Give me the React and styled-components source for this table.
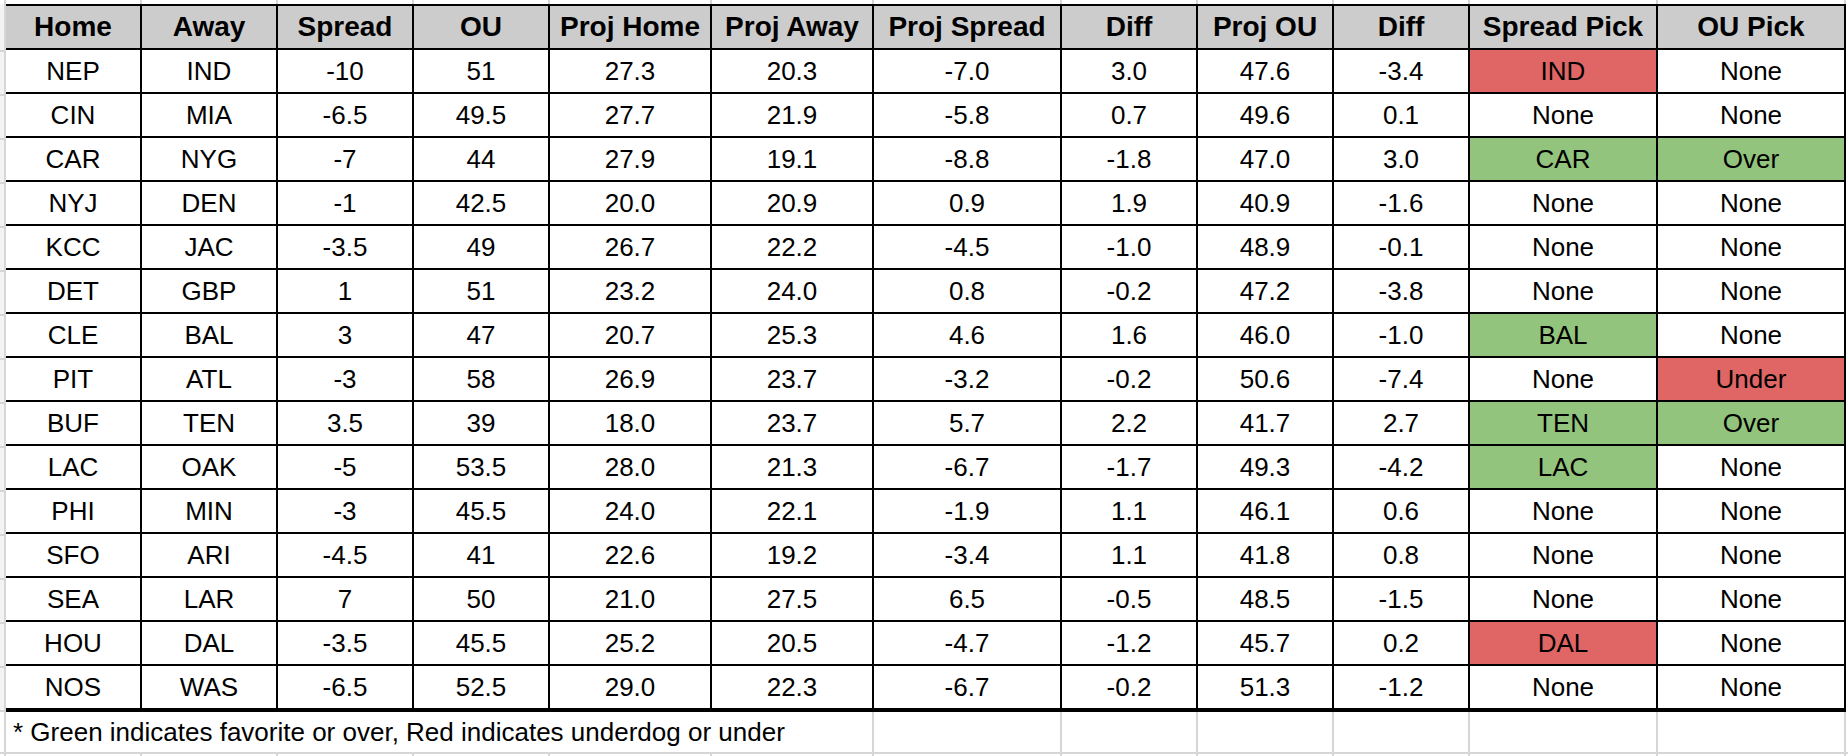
import React from "react";
import styled, { createGlobalStyle } from "styled-components";

const Global = createGlobalStyle`
  html, body { margin: 0; padding: 0; background: #ffffff; }
  body { font-family: "Liberation Sans", Arial, sans-serif; color: #000; overflow: hidden; }
`;

const GRID = "#d6d6d6";
const COLS = [134, 134, 134, 134, 160, 160, 186, 134, 134, 134, 186, 186];
const tableTemplate = COLS.map((w) => `${w}px`).join(" ");
const sheetTemplate = `4px ${tableTemplate} 1fr`;

const Page = styled.div`
  width: 1848px;
  height: 756px;
  display: flex;
  flex-direction: column;
  overflow: hidden;
`;

const GridStrip = styled.div`
  display: grid;
  grid-template-columns: ${sheetTemplate};
  column-gap: 2px;
  background: ${GRID};
  height: ${(p) => (p.$h ? `${p.$h}px` : "auto")};
  flex: ${(p) => (p.$grow ? "1 1 auto" : "0 0 auto")};
`;

const BlankCell = styled.div`
  background: #ffffff;
`;

const Middle = styled.div`
  display: flex;
  flex: 0 0 auto;
`;

const Gutter = styled.div`
  width: 4px;
  border-right: 2px solid ${GRID};
  display: flex;
  flex-direction: column;
  padding-top: 4px;
  background: #f3f3f3;
`;

const GutterRow = styled.div`
  height: 42px;
  border-bottom: 2px solid ${GRID};
`;

const Table = styled.div`
  display: grid;
  grid-template-columns: ${tableTemplate};
  grid-auto-rows: 42px;
  gap: 2px;
  background: #000;
  border-top: 2px solid #000;
  border-right: 2px solid #000;
  border-bottom: 2px solid #000;
`;

const Cell = styled.div`
  display: flex;
  align-items: center;
  justify-content: center;
  padding-top: 1px;
  font-size: 26px;
  white-space: nowrap;
  background: ${(p) =>
    p.$tone === "red" ? "#e06666" : p.$tone === "green" ? "#93c47d" : "#ffffff"};
`;

const HeadCell = styled(Cell)`
  background: #cccccc;
  font-weight: 700;
  font-size: 28px;
  padding-top: 0;
`;

const Note = styled.div`
  grid-column: span 6;
  background: #ffffff;
  display: flex;
  align-items: center;
  padding-left: 7px;
  padding-top: 1px;
  font-size: 26px;
  white-space: nowrap;
`;

const FootRow = styled(GridStrip)`
  border-bottom: 2px solid ${GRID};
`;

const headers = [
  "Home", "Away", "Spread", "OU", "Proj Home", "Proj Away",
  "Proj Spread", "Diff", "Proj OU", "Diff", "Spread Pick", "OU Pick",
];

const rows = [
  ["NEP", "IND", "-10", "51", "27.3", "20.3", "-7.0", "3.0", "47.6", "-3.4", "IND", "None", "red", null],
  ["CIN", "MIA", "-6.5", "49.5", "27.7", "21.9", "-5.8", "0.7", "49.6", "0.1", "None", "None", null, null],
  ["CAR", "NYG", "-7", "44", "27.9", "19.1", "-8.8", "-1.8", "47.0", "3.0", "CAR", "Over", "green", "green"],
  ["NYJ", "DEN", "-1", "42.5", "20.0", "20.9", "0.9", "1.9", "40.9", "-1.6", "None", "None", null, null],
  ["KCC", "JAC", "-3.5", "49", "26.7", "22.2", "-4.5", "-1.0", "48.9", "-0.1", "None", "None", null, null],
  ["DET", "GBP", "1", "51", "23.2", "24.0", "0.8", "-0.2", "47.2", "-3.8", "None", "None", null, null],
  ["CLE", "BAL", "3", "47", "20.7", "25.3", "4.6", "1.6", "46.0", "-1.0", "BAL", "None", "green", null],
  ["PIT", "ATL", "-3", "58", "26.9", "23.7", "-3.2", "-0.2", "50.6", "-7.4", "None", "Under", null, "red"],
  ["BUF", "TEN", "3.5", "39", "18.0", "23.7", "5.7", "2.2", "41.7", "2.7", "TEN", "Over", "green", "green"],
  ["LAC", "OAK", "-5", "53.5", "28.0", "21.3", "-6.7", "-1.7", "49.3", "-4.2", "LAC", "None", "green", null],
  ["PHI", "MIN", "-3", "45.5", "24.0", "22.1", "-1.9", "1.1", "46.1", "0.6", "None", "None", null, null],
  ["SFO", "ARI", "-4.5", "41", "22.6", "19.2", "-3.4", "1.1", "41.8", "0.8", "None", "None", null, null],
  ["SEA", "LAR", "7", "50", "21.0", "27.5", "6.5", "-0.5", "48.5", "-1.5", "None", "None", null, null],
  ["HOU", "DAL", "-3.5", "45.5", "25.2", "20.5", "-4.7", "-1.2", "45.7", "0.2", "DAL", "None", "red", null],
  ["NOS", "WAS", "-6.5", "52.5", "29.0", "22.3", "-6.7", "-0.2", "51.3", "-1.2", "None", "None", null, null],
];

const blanks = (n) => Array.from({ length: n }, (_, i) => <BlankCell key={i} />);

export default function App() {
  return (
    <Page>
      <Global />
      <GridStrip $h={4}>{blanks(14)}</GridStrip>
      <Middle>
        <Gutter>
          {Array.from({ length: 16 }, (_, i) => (
            <GutterRow key={i} />
          ))}
        </Gutter>
        <Table>
          {headers.map((h, i) => (
            <HeadCell key={`h${i}`}>{h}</HeadCell>
          ))}
          {rows.map((r, ri) =>
            r.slice(0, 12).map((v, ci) => (
              <Cell
                key={`${ri}-${ci}`}
                $tone={ci === 10 ? r[12] : ci === 11 ? r[13] : null}
              >
                {v}
              </Cell>
            ))
          )}
        </Table>
      </Middle>
      <FootRow $h={40}>
        <BlankCell />
        <Note>* Green indicates favorite or over, Red indicates underdog or under</Note>
        {blanks(7)}
      </FootRow>
      <GridStrip $grow>{blanks(14)}</GridStrip>
    </Page>
  );
}
